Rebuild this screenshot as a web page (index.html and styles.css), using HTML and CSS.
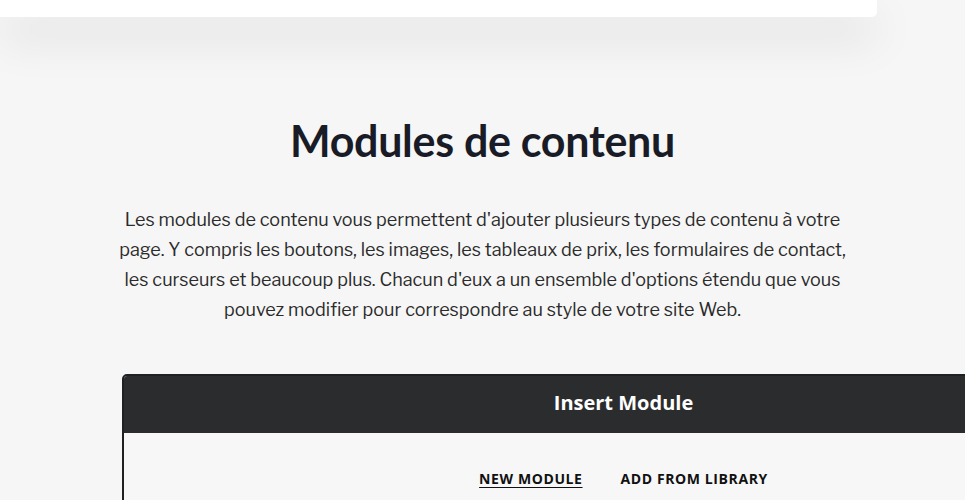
FILE: index.html
```html
<!DOCTYPE html>
<html lang="fr">
  <head>
    <meta charset="UTF-8" />
    <meta name="viewport" content="width=device-width, initial-scale=1.0" />
    <title>Modules de contenu</title>
    <link rel="stylesheet" href="styles.css">
  </head>
  <body>
    <div class="top-card"></div>
    <section class="modules">
      <h2>Modules de contenu</h2>
      <p class="intro">
        Les modules de contenu vous permettent d'ajouter plusieurs types de contenu à votre
        page. Y compris les boutons, les images, les tableaux de prix, les formulaires de contact,
        les curseurs et beaucoup plus. Chacun d'eux a un ensemble d'options étendu que vous
        pouvez modifier pour correspondre au style de votre site Web.
      </p>
      <div class="modal">
        <div class="modal-header">Insert Module</div>
        <div class="modal-body">
          <nav class="tabs">
            <a class="tab active">New Module</a>
            <a class="tab">Add From Library</a>
          </nav>
        </div>
      </div>
    </section>
  </body>
</html>
```

FILE: styles.css
```css
html,
body {
  overflow: hidden;
}
body {
  margin: 0;
  background-color: #f6f6f6;
  font-family: "Libre Franklin", Inter, "Noto Sans", sans-serif;
  color: #2c2c2c;
  height: 500px;
}
.top-card {
  width: 877px;
  height: 17px;
  background-color: #fff;
  border-radius: 0 0 5px 0;
  box-shadow: 0 20px 45px rgba(0, 0, 0, 0.13);
}
.modules {
  width: 740px;
  margin: 0 auto;
  padding-top: 96px;
  text-align: center;
}
h2 {
  margin: 0;
  font-family: Lato, "Open Sans", sans-serif;
  font-weight: 700;
  font-size: 43px;
  line-height: 56px;
  color: #191c26;
  letter-spacing: -0.3px;
}
.intro {
  margin: 36px 0 0;
  font-size: 18px;
  line-height: 30px;
  color: #2b2b2b;
}
.modal {
  margin-top: 49px;
  margin-left: 9px;
  width: 1000px;
  border: 2px solid #1f2022;
  border-radius: 5px 5px 0 0;
  background-color: #f7f7f7;
  font-family: "Open Sans", sans-serif;
}
.modal-header {
  height: 57px;
  line-height: 54px;
  background-color: #2b2c2e;
  color: #fff;
  font-weight: 700;
  font-size: 20px;
  border-radius: 3px 3px 0 0;
}
.modal-body {
  padding-top: 35px;
  height: 120px;
}
.tabs {
  display: flex;
  justify-content: center;
  gap: 38px;
}
.tab {
  text-transform: uppercase;
  font-weight: 700;
  font-size: 14px;
  letter-spacing: 0.6px;
  color: #111;
  line-height: 22px;
}
.tab.active {
  text-decoration: underline;
  text-underline-offset: 3px;
}
```
